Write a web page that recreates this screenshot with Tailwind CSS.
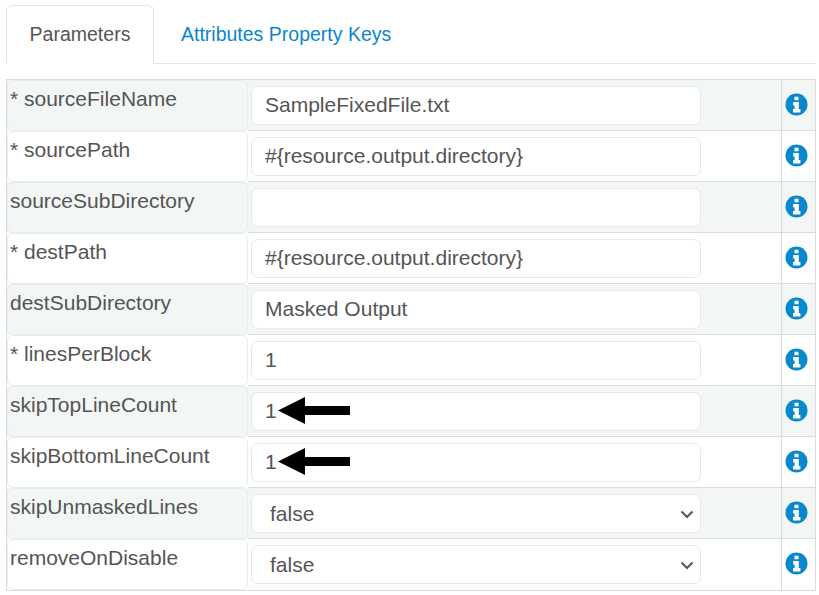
<!DOCTYPE html>
<html><head><meta charset="utf-8">
<script src="https://cdn.jsdelivr.net/npm/@tailwindcss/browser@4"></script>
<title>Parameters</title></head>
<body class="bg-white font-['Liberation_Sans',Arial,sans-serif] text-[21px] text-[#555] w-[819px] h-[595px] overflow-hidden">
<div class="pt-[5px] pl-[6px] pr-[3px]">
  <div class="flex h-[59px] border-b border-[#e3e3e3] w-[810px] text-[19.5px]">
    <div class="w-[148px] h-[59px] pt-[1px] bg-white border border-b-white border-[#e3e3e3] rounded-t-[6px] flex items-center justify-center">Parameters</div>
    <div class="pl-[27px] pt-[1px] flex items-center text-[#0a86cb]">Attributes Property Keys</div>
  </div>
  <div class="mt-[15px] w-[810px] border border-[#dcdcdc]">

    <div class="flex h-[51px] bg-[#f2f6f4]">
      <div class="w-[241px] shrink-0 border border-[#e8ecea] rounded-[6px] px-[2px] pt-[6px] leading-[24px]">* sourceFileName</div>
      <div class="w-[533px] shrink-0 pl-[3px] pt-[6px] border-b border-[#dcdcdc]"><input value="SampleFixedFile.txt" class="w-[450px] h-[39px] bg-white border border-[#e8e8e8] rounded-[7px] px-[13px] pb-[2px] text-[21px] text-[#555]"></div>
      <div class="flex-1 border-l border-b border-[#dcdcdc] flex items-center justify-center pr-[4px] pb-[2px]"><svg class="w-[23px] h-[23px]" viewBox="0 0 23 23"><circle cx="11.5" cy="11.5" r="11" fill="#0a88cc"/><path fill="#fff" d="M9.5 3.8h4v3.4h-4zM8.2 9h5.6v7h1.6v3.4H8v-3.4h1.6v-3.6H8.2z"/></svg></div>
    </div>

    <div class="flex h-[51px]">
      <div class="w-[241px] shrink-0 border border-[#e8ecea] rounded-[6px] px-[2px] pt-[6px] leading-[24px]">* sourcePath</div>
      <div class="w-[533px] shrink-0 pl-[3px] pt-[6px] border-b border-[#dcdcdc]"><input value="#{resource.output.directory}" class="w-[450px] h-[39px] bg-white border border-[#e8e8e8] rounded-[7px] px-[13px] pb-[2px] text-[21px] text-[#555]"></div>
      <div class="flex-1 border-l border-b border-[#dcdcdc] flex items-center justify-center pr-[4px] pb-[2px]"><svg class="w-[23px] h-[23px]" viewBox="0 0 23 23"><circle cx="11.5" cy="11.5" r="11" fill="#0a88cc"/><path fill="#fff" d="M9.5 3.8h4v3.4h-4zM8.2 9h5.6v7h1.6v3.4H8v-3.4h1.6v-3.6H8.2z"/></svg></div>
    </div>

    <div class="flex h-[51px] bg-[#f2f6f4]">
      <div class="w-[241px] shrink-0 border border-[#e8ecea] rounded-[6px] px-[2px] pt-[6px] leading-[24px]">sourceSubDirectory</div>
      <div class="w-[533px] shrink-0 pl-[3px] pt-[6px] border-b border-[#dcdcdc]"><input value="" class="w-[450px] h-[39px] bg-white border border-[#e8e8e8] rounded-[7px] px-[13px] pb-[2px] text-[21px] text-[#555]"></div>
      <div class="flex-1 border-l border-b border-[#dcdcdc] flex items-center justify-center pr-[4px] pb-[2px]"><svg class="w-[23px] h-[23px]" viewBox="0 0 23 23"><circle cx="11.5" cy="11.5" r="11" fill="#0a88cc"/><path fill="#fff" d="M9.5 3.8h4v3.4h-4zM8.2 9h5.6v7h1.6v3.4H8v-3.4h1.6v-3.6H8.2z"/></svg></div>
    </div>

    <div class="flex h-[51px]">
      <div class="w-[241px] shrink-0 border border-[#e8ecea] rounded-[6px] px-[2px] pt-[6px] leading-[24px]">* destPath</div>
      <div class="w-[533px] shrink-0 pl-[3px] pt-[6px] border-b border-[#dcdcdc]"><input value="#{resource.output.directory}" class="w-[450px] h-[39px] bg-white border border-[#e8e8e8] rounded-[7px] px-[13px] pb-[2px] text-[21px] text-[#555]"></div>
      <div class="flex-1 border-l border-b border-[#dcdcdc] flex items-center justify-center pr-[4px] pb-[2px]"><svg class="w-[23px] h-[23px]" viewBox="0 0 23 23"><circle cx="11.5" cy="11.5" r="11" fill="#0a88cc"/><path fill="#fff" d="M9.5 3.8h4v3.4h-4zM8.2 9h5.6v7h1.6v3.4H8v-3.4h1.6v-3.6H8.2z"/></svg></div>
    </div>

    <div class="flex h-[51px] bg-[#f2f6f4]">
      <div class="w-[241px] shrink-0 border border-[#e8ecea] rounded-[6px] px-[2px] pt-[6px] leading-[24px]">destSubDirectory</div>
      <div class="w-[533px] shrink-0 pl-[3px] pt-[6px] border-b border-[#dcdcdc]"><input value="Masked Output" class="w-[450px] h-[39px] bg-white border border-[#e8e8e8] rounded-[7px] px-[13px] pb-[2px] text-[21px] text-[#555]"></div>
      <div class="flex-1 border-l border-b border-[#dcdcdc] flex items-center justify-center pr-[4px] pb-[2px]"><svg class="w-[23px] h-[23px]" viewBox="0 0 23 23"><circle cx="11.5" cy="11.5" r="11" fill="#0a88cc"/><path fill="#fff" d="M9.5 3.8h4v3.4h-4zM8.2 9h5.6v7h1.6v3.4H8v-3.4h1.6v-3.6H8.2z"/></svg></div>
    </div>

    <div class="flex h-[51px]">
      <div class="w-[241px] shrink-0 border border-[#e8ecea] rounded-[6px] px-[2px] pt-[6px] leading-[24px]">* linesPerBlock</div>
      <div class="w-[533px] shrink-0 pl-[3px] pt-[6px] border-b border-[#dcdcdc]"><input value="1" class="w-[450px] h-[39px] bg-white border border-[#e8e8e8] rounded-[7px] px-[13px] pb-[2px] text-[21px] text-[#555]"></div>
      <div class="flex-1 border-l border-b border-[#dcdcdc] flex items-center justify-center pr-[4px] pb-[2px]"><svg class="w-[23px] h-[23px]" viewBox="0 0 23 23"><circle cx="11.5" cy="11.5" r="11" fill="#0a88cc"/><path fill="#fff" d="M9.5 3.8h4v3.4h-4zM8.2 9h5.6v7h1.6v3.4H8v-3.4h1.6v-3.6H8.2z"/></svg></div>
    </div>

    <div class="flex h-[51px] bg-[#f2f6f4]">
      <div class="w-[241px] shrink-0 border border-[#e8ecea] rounded-[6px] px-[2px] pt-[6px] leading-[24px]">skipTopLineCount</div>
      <div class="relative w-[533px] shrink-0 pl-[3px] pt-[6px] border-b border-[#dcdcdc]"><input value="1" class="w-[450px] h-[39px] bg-white border border-[#e8e8e8] rounded-[7px] px-[13px] pb-[2px] text-[21px] text-[#555]">
        <svg class="absolute left-[30px] top-[11px] w-[73px] h-[27px]" viewBox="0 0 73 27"><path fill="#000" d="M0 13.5 27 0v9h45v9H27v9z"/></svg></div>
      <div class="flex-1 border-l border-b border-[#dcdcdc] flex items-center justify-center pr-[4px] pb-[2px]"><svg class="w-[23px] h-[23px]" viewBox="0 0 23 23"><circle cx="11.5" cy="11.5" r="11" fill="#0a88cc"/><path fill="#fff" d="M9.5 3.8h4v3.4h-4zM8.2 9h5.6v7h1.6v3.4H8v-3.4h1.6v-3.6H8.2z"/></svg></div>
    </div>

    <div class="flex h-[51px]">
      <div class="w-[241px] shrink-0 border border-[#e8ecea] rounded-[6px] px-[2px] pt-[6px] leading-[24px]">skipBottomLineCount</div>
      <div class="relative w-[533px] shrink-0 pl-[3px] pt-[6px] border-b border-[#dcdcdc]"><input value="1" class="w-[450px] h-[39px] bg-white border border-[#e8e8e8] rounded-[7px] px-[13px] pb-[2px] text-[21px] text-[#555]">
        <svg class="absolute left-[30px] top-[11px] w-[73px] h-[27px]" viewBox="0 0 73 27"><path fill="#000" d="M0 13.5 27 0v9h45v9H27v9z"/></svg></div>
      <div class="flex-1 border-l border-b border-[#dcdcdc] flex items-center justify-center pr-[4px] pb-[2px]"><svg class="w-[23px] h-[23px]" viewBox="0 0 23 23"><circle cx="11.5" cy="11.5" r="11" fill="#0a88cc"/><path fill="#fff" d="M9.5 3.8h4v3.4h-4zM8.2 9h5.6v7h1.6v3.4H8v-3.4h1.6v-3.6H8.2z"/></svg></div>
    </div>

    <div class="flex h-[51px] bg-[#f2f6f4]">
      <div class="w-[241px] shrink-0 border border-[#e8ecea] rounded-[6px] px-[2px] pt-[6px] leading-[24px]">skipUnmaskedLines</div>
      <div class="w-[533px] shrink-0 pl-[3px] pt-[6px] border-b border-[#dcdcdc]"><div class="flex items-center justify-between w-[450px] h-[39px] bg-white border border-[#e8e8e8] rounded-[7px] pl-[18px] pr-[5px] text-[21px]"><span>false</span><svg class="w-[16px] h-[16px]" viewBox="0 0 16 16"><path d="M2.5 5.5 8 11l5.5-5.5" fill="none" stroke="#555" stroke-width="2"/></svg></div></div>
      <div class="flex-1 border-l border-b border-[#dcdcdc] flex items-center justify-center pr-[4px] pb-[2px]"><svg class="w-[23px] h-[23px]" viewBox="0 0 23 23"><circle cx="11.5" cy="11.5" r="11" fill="#0a88cc"/><path fill="#fff" d="M9.5 3.8h4v3.4h-4zM8.2 9h5.6v7h1.6v3.4H8v-3.4h1.6v-3.6H8.2z"/></svg></div>
    </div>

    <div class="flex h-[51px]">
      <div class="w-[241px] shrink-0 border border-[#e8ecea] rounded-[6px] px-[2px] pt-[6px] leading-[24px]">removeOnDisable</div>
      <div class="w-[533px] shrink-0 pl-[3px] pt-[6px]"><div class="flex items-center justify-between w-[450px] h-[39px] bg-white border border-[#e8e8e8] rounded-[7px] pl-[18px] pr-[5px] text-[21px]"><span>false</span><svg class="w-[16px] h-[16px]" viewBox="0 0 16 16"><path d="M2.5 5.5 8 11l5.5-5.5" fill="none" stroke="#555" stroke-width="2"/></svg></div></div>
      <div class="flex-1 border-l border-[#dcdcdc] flex items-center justify-center pr-[4px] pb-[3px]"><svg class="w-[23px] h-[23px]" viewBox="0 0 23 23"><circle cx="11.5" cy="11.5" r="11" fill="#0a88cc"/><path fill="#fff" d="M9.5 3.8h4v3.4h-4zM8.2 9h5.6v7h1.6v3.4H8v-3.4h1.6v-3.6H8.2z"/></svg></div>
    </div>

  </div>
</div>
</body></html>
